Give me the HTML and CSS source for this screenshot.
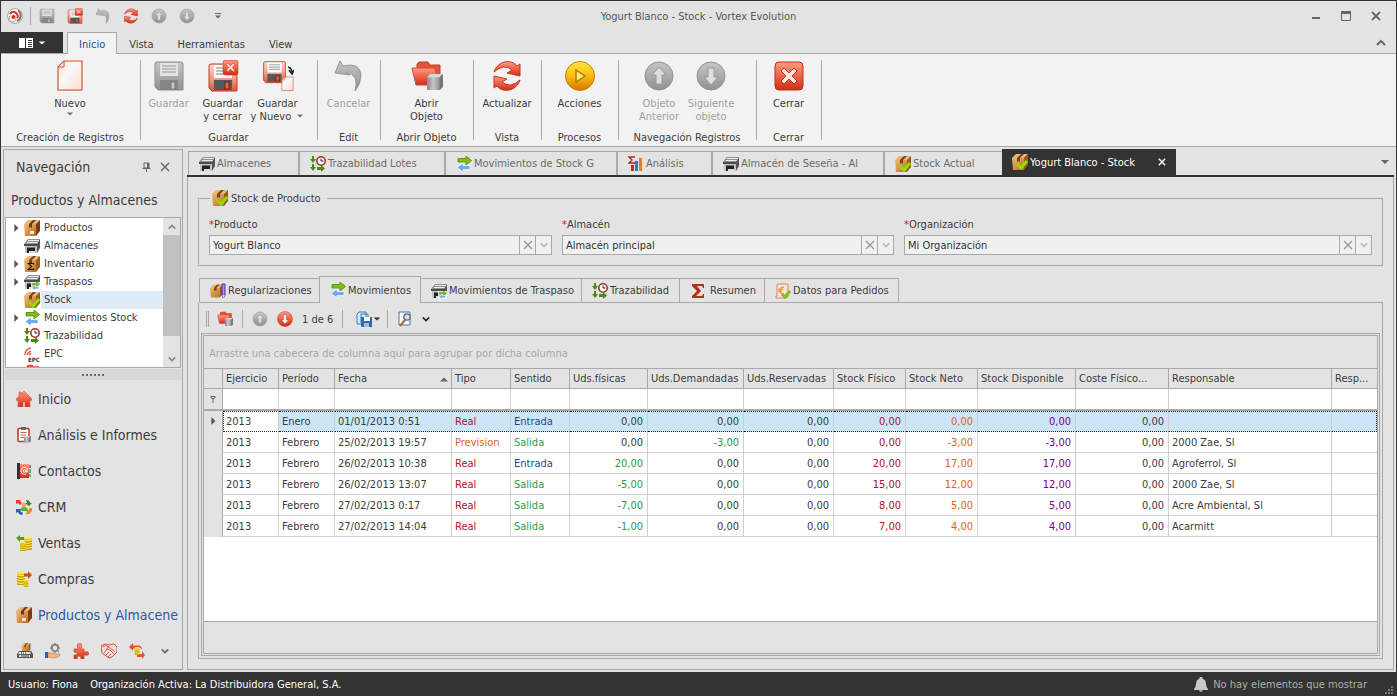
FILE: index.html
```html
<!DOCTYPE html>
<html lang="es">
<head>
<meta charset="utf-8">
<title>Yogurt Blanco - Stock - Vortex Evolution</title>
<link rel="stylesheet" href="styles.css">
</head>
<body>
<svg class="sprite" aria-hidden="true">
  <defs>
    <linearGradient id="red" x1="0" y1="0" x2="0" y2="1"><stop offset="0" stop-color="#ff9a80"/><stop offset=".5" stop-color="#f0604a"/><stop offset="1" stop-color="#c93018"/></linearGradient>
    <linearGradient id="body" x1="0" y1="0" x2="0" y2="1"><stop offset="0" stop-color="#fbd3c9"/><stop offset=".5" stop-color="#f3a292"/><stop offset="1" stop-color="#e2543a"/></linearGradient>
    <linearGradient id="grey" x1="0" y1="0" x2="0" y2="1"><stop offset="0" stop-color="#c6c6c6"/><stop offset="1" stop-color="#919191"/></linearGradient>
    <linearGradient id="gold" x1="0" y1="0" x2="0" y2="1"><stop offset="0" stop-color="#ffe53a"/><stop offset=".5" stop-color="#f9bd10"/><stop offset="1" stop-color="#d87500"/></linearGradient>
    <linearGradient id="metal" x1="0" y1="0" x2="1" y2="0"><stop offset="0" stop-color="#8a8a8a"/><stop offset=".4" stop-color="#c8c8c8"/><stop offset="1" stop-color="#747474"/></linearGradient>
    <linearGradient id="page" x1="0" y1="0" x2="1" y2="1"><stop offset="0" stop-color="#ffd9cf"/><stop offset=".4" stop-color="#f8f8f8"/><stop offset="1" stop-color="#ffdcd2"/></linearGradient>
    <linearGradient id="wood" x1="0" y1="0" x2="1" y2="1"><stop offset="0" stop-color="#f1bb72"/><stop offset="1" stop-color="#b96c24"/></linearGradient>
  </defs>
  <symbol id="logo" viewBox="0 0 16 16"><circle cx="8" cy="8" r="7.5" fill="#f6f6f6" stroke="#aaa"/><path d="M11 2.500a6 6 0 0 1-1 10.500" fill="none" stroke="#777" stroke-width="2"/><path d="M3 8a3.500 3.500 0 1 0 6 2.500" fill="none" stroke="#999"/><path d="M3 6q3-4 6-1t1 5" fill="none" stroke="#e02a22" stroke-width="2"/><circle cx="6.500" cy="9" r="2" fill="#e02a22"/></symbol>
  <symbol id="save-grey" viewBox="0 0 32 32"><path d="M2 4q0-2 2-2h24q2 0 2 2v26H5l-3-3z" fill="url(#grey)" stroke="#8d8d8d"/><path d="M7 3h18v13H7z" fill="#e4e4e4"/><path d="M9 6h14M9 9h14M9 12h14" stroke="#b0b0b0" stroke-width="1.500"/><path d="M7 20h18v10H7z" fill="#858585"/><path d="M18 22h4v7h-4z" fill="#c8c8c8" stroke="#777"/></symbol>
  <symbol id="save-red" viewBox="0 0 32 32"><path d="M2 6q0-2 2-2h24q2 0 2 2v25H5l-3-3z" fill="url(#body)" stroke="#bd3d28"/><path d="M7 5h18v13H7z" fill="#fafafa"/><path d="M9 8h14M9 11h14M9 14h14" stroke="#aaa" stroke-width="1.500"/><path d="M7 20h18v10H7z" fill="#585858"/><path d="M18 22h4v7h-4z" fill="#ef6044" stroke="#702015"/></symbol>
  <symbol id="close-red" viewBox="0 0 32 32"><rect x="2" y="2" width="28" height="28" rx="4" fill="url(#red)" stroke="#c12d17"/><path d="M8 11l3-3 5 5 5-5 3 3-5 5 5 5-3 3-5-5-5 5-3-3 5-5z" fill="#ffe5df" stroke="#b83a25"/></symbol>
  <symbol id="save-close" viewBox="0 0 32 32"><use href="#save-red"/><use href="#close-red" x="15" y="-1" width="17" height="17"/></symbol>
  <symbol id="new" viewBox="0 0 32 32"><path d="M4 9l6-6V1h18v30H4z" fill="#999" opacity=".35"/><path d="M4 7l6-6h18v29H4z" fill="url(#page)" stroke="#d5532f" stroke-width="1.200"/><path d="M4 7h6V1z" fill="#ffece6" stroke="#d5532f"/></symbol>
  <symbol id="save-new" viewBox="0 0 32 32"><use href="#save-red" x="0" y="-2" width="25" height="26"/><path d="M26 7q4 1 4 6m-3-3l3 4 2-4" fill="none" stroke="#222" stroke-width="1.500"/><use href="#new" x="18" y="16" width="15" height="16"/></symbol>
  <symbol id="undo" viewBox="0 0 32 32"><path d="M2 13L7 1l3 5Q27 2 28 15q0 9-6 16 2-9 0-13-3-5-9-6l4 3z" fill="url(#grey)" stroke="#969696"/></symbol>
  <symbol id="cyl" viewBox="0 0 16 16"><path d="M0 3L3 0h12v12l-3 3H0z" fill="url(#metal)"/><path d="M0 3L3 0h12l-3 3z" fill="#d6d6d6"/><path d="M12 3l3-3v12l-3 3z" fill="#777"/></symbol>
  <symbol id="folder" viewBox="0 0 32 32"><path d="M6 4l2-2h9l2 3h10v17H6z" fill="#e5513c" stroke="#c73c27"/><path d="M1 8h23l3 17H5z" fill="url(#red)" stroke="#d24a36"/></symbol>
  <symbol id="open-obj" viewBox="0 0 32 32"><use href="#folder"/><use href="#cyl" x="16" y="14" width="17" height="17"/></symbol>
  <symbol id="refresh" viewBox="0 0 32 32"><path d="M3 12C7 0 21-1 26 6l3-2v12L16 13l5-3Q13 3 3 12z" fill="url(#red)" stroke="#c63521"/><path d="M29 20C25 32 11 33 6 26l-3 2V16l13 3-5 3q8 7 18-2z" fill="url(#red)" stroke="#c63521"/></symbol>
  <symbol id="play" viewBox="0 0 32 32"><circle cx="16" cy="16" r="14.500" fill="url(#gold)" stroke="#c78200"/><path d="M12 10l9 6-9 6z" fill="#ffec74" stroke="#b77900" stroke-width="1.500"/></symbol>
  <symbol id="up-grey" viewBox="0 0 32 32"><circle cx="16" cy="16" r="14" fill="url(#grey)" stroke="#919191"/><path d="M16 7l7 8h-4v9h-6v-9H9z" fill="#dedede" stroke="#999"/></symbol>
  <symbol id="down-grey" viewBox="0 0 32 32"><circle cx="16" cy="16" r="14" fill="url(#grey)" stroke="#919191"/><path d="M16 25l7-8h-4V8h-6v9H9z" fill="#dedede" stroke="#999"/></symbol>
  <symbol id="down-red" viewBox="0 0 32 32"><circle cx="16" cy="16" r="15" fill="url(#red)" stroke="#b93824"/><path d="M16 26l7-8h-4V7h-6v11H9z" fill="#fff" stroke="#c73c27"/></symbol>
  <symbol id="box" viewBox="0 0 16 16"><path d="M0 4l4-4h12l-4 4z" fill="#e8b777"/><path d="M0 4h12v12H1z" fill="url(#wood)"/><path d="M12 4l4-4v11l-4 5z" fill="#7a3d12"/><path d="M5 4l4-4h3L8 4v4L6.500 7 5 8z" fill="#6d3a14"/><path d="M6 11h4v3H6z" fill="#f7e5cd"/></symbol>
  <symbol id="box-plain" viewBox="0 0 16 16"><path d="M0 4l4-4h12l-4 4z" fill="#e8b777"/><path d="M0 4h12v12H1z" fill="url(#wood)"/><path d="M12 4l4-4v11l-4 5z" fill="#9a5a20"/><path d="M5 4l4-4h3L8 4v4L6.500 7 5 8z" fill="#7d4317"/></symbol>
  <symbol id="inventory" viewBox="0 0 16 16"><use href="#box-plain"/><path d="M9.500 8.500V7.500h-5l3 3-3 3h5v-1" fill="none" stroke="#2b1505" stroke-width="1.200"/></symbol>
  <symbol id="stock" viewBox="0 0 16 16"><use href="#box-plain"/><path d="M5 10l4 4 6-7" fill="none" stroke="#8fe000" stroke-width="3"/></symbol>
  <symbol id="box-pen" viewBox="0 0 16 16"><use href="#box-plain" y="1" width="13" height="14"/><path d="M12 1h3v11l-1.500 3L12 12z" fill="#b08be8" stroke="#5128a0"/><path d="M12 12h3l-1.500 3z" fill="#fff" stroke="#777" stroke-width=".5"/></symbol>
  <symbol id="store" viewBox="0 0 16 16"><path d="M0 6l4-5h12l-3 5z" fill="#8f8f8f"/><path d="M3 4.500h11M4 2.500h11" stroke="#ededed"/><path d="M13 6l3-5v9l-3 5z" fill="#555"/><path d="M0 6h13v2H0z" fill="#4c4c4c"/><path d="M1 8h12v7H1z" fill="#c2c2c2"/><path d="M3 9.500h8V15H3z" fill="#222"/><path d="M5 13h6v2H5z" fill="#ddd"/></symbol>
  <symbol id="arrows" viewBox="0 0 16 16"><path d="M2 2.500h8V0l5.500 4.500L10 9V6H2z" fill="#7cc20a" stroke="#4c8a08" stroke-width=".8"/><path d="M14 9.500H7V7l-6 4.500L7 16v-2.500h7z" fill="#6aaaf2" stroke="#fff" stroke-width=".7"/></symbol>
  <symbol id="transfer" viewBox="0 0 16 16"><use href="#store"/><path d="M7 8h9v8H7z" fill="#fff" opacity=".8"/><use href="#arrows" x="7" y="8" width="9" height="8"/></symbol>
  <symbol id="trace" viewBox="0 0 16 16"><path d="M2 0h2v3h2L3 7 0 3h2zM2 8h2v3h2l-3 4-3-4h2zM7 11h4V9l4 3.500L11 16v-2H7z" fill="#4b8a12"/><circle cx="11" cy="5" r="4.200" fill="#fff" stroke="#a23522" stroke-width="1.600"/><path d="M11 2.500V5h2.500" fill="none" stroke="#222"/></symbol>
  <symbol id="epc" viewBox="0 0 16 16"><path d="M1 9V8a7 7 0 0 1 6-6M3 9a6 6 0 0 1 4-4M5 9l2-2" fill="none" stroke="#e0604c" stroke-width="1.500"/><text x="4" y="15.500" font-family="DejaVu Sans Condensed, sans-serif" font-size="6" font-weight="bold" fill="#333">EPC</text></symbol>
  <symbol id="home" viewBox="0 0 16 16"><path d="M0 8l3-3V1h2v2l3-3 8 8-1 2-1-1v7H9v-5H7v5H2V9l-1 1z" fill="url(#red)" stroke="#e1543c" stroke-width=".6"/></symbol>
  <symbol id="clip" viewBox="0 0 16 16"><rect x="2" y="1.500" width="11" height="13" rx="1" fill="#fff" stroke="#c33b2d" stroke-width="1.600"/><path d="M5 0h5v3H5z" fill="#666"/><path d="M4.500 5.500h6M4.500 8h6M4.500 10.500h4" stroke="#c96053"/><use href="#cyl" x="8" y="9" width="7" height="7"/></symbol>
  <symbol id="contacts" viewBox="0 0 16 16"><path d="M1 0h3v16H1z" fill="#333"/><path d="M4 1h9v14H4z" fill="url(#red)"/><path d="M14 2v3" stroke="#9335d0" stroke-width="1.500"/><path d="M14 6v4" stroke="#20a070" stroke-width="1.500"/><path d="M14 11v3" stroke="#4cab20" stroke-width="1.500"/><circle cx="8.500" cy="8" r="1.300" fill="none" stroke="#fff" stroke-width=".9"/><path d="M10 6.500v2.500q2 .5 2-1.500a3.500 3.500 0 1 0-2 3.500" fill="none" stroke="#fff" stroke-width=".9"/></symbol>
  <symbol id="crm" viewBox="0 0 16 16"><path d="M0 1h5L4 2l2 2-2 2-2-2-2 1z" fill="#e5402d"/><path d="M10 1q4 0 4 3h2l-3 3-4-3h2z" fill="#3f7d24"/><path d="M0 10l5 0-1 2 3 2-1 2q-3 0-4-3l-2 1z" fill="#2864b8"/><path d="M16 9v4l-1-1q-1 4-5 3l1-3q2 0 2-2h-2z" fill="#e48721"/><circle cx="8" cy="6" r="2.300" fill="#e7a374"/><path d="M4 12q0-4 4-4t4 4z" fill="#67ad3c"/></symbol>
  <symbol id="coins" viewBox="0 0 8 14"><path d="M0 1.500h8V14H0z" fill="#e9c000"/><ellipse cx="4" cy="1.500" rx="4" ry="1.500" fill="#fbe96a"/><path d="M0 4q4 2 8 0M0 6.500q4 2 8 0M0 9q4 2 8 0M0 11.500q4 2 8 0" fill="none" stroke="#fff07a"/><path d="M0 5q4 2 8 0M0 7.500q4 2 8 0M0 10q4 2 8 0M0 13q4 1 8 0" fill="none" stroke="#a88100" stroke-width=".7"/></symbol>
  <symbol id="sales" viewBox="0 0 16 16"><use href="#coins" x="8" y="1" width="8" height="14"/><use href="#coins" x="4" y="6" width="6" height="10"/><path d="M0 3l4-3v2h4v3H4v2z" fill="#54a317"/></symbol>
  <symbol id="buys" viewBox="0 0 16 16"><use href="#coins" x="1" y="0" width="8" height="14"/><use href="#coins" x="7" y="8" width="6" height="8"/><path d="M16 4l-4-4v2.500H8v3h4V8z" fill="#d04a16"/></symbol>
  <symbol id="print-box" viewBox="0 0 16 16"><use href="#box-plain" x="4" y="0" width="10" height="9"/><path d="M2 8h12l2 3v4H0v-4z" fill="#555"/><path d="M2 9h11l1 2H1zM2 12h11v2H2z" fill="#e5e5e5"/><path d="M4 10h1m1 0h1m1 0h1M4 13h8" stroke="#444"/></symbol>
  <symbol id="gear-hand" viewBox="0 0 16 16"><circle cx="10" cy="5" r="3.200" fill="none" stroke="#888" stroke-width="2"/><path d="M10 0v2M10 8v2M5 5h2M13 5h2M6.500 1.500l1 1M13 8l1 1M13.500 1.500l-1 1" stroke="#888" stroke-width="1.500"/><path d="M3 10h4l3 1h5q1 1-2 3l-4 1-6-1z" fill="#f0b987" stroke="#c47c4a" stroke-width=".7"/><path d="M0 9h3v6H0z" fill="#2564a8"/></symbol>
  <symbol id="puzzle" viewBox="0 0 16 16"><path d="M1 6h4q-2-6 1.500-6T8 6h3v3q5-1 5 1.500T11 12v4H8q0-3-2-3t-2 3H1v-4q3 0 3-1.500T1 9z" fill="url(#red)" stroke="#d8452f" stroke-width=".7"/></symbol>
  <symbol id="shake" viewBox="0 0 16 16"><path d="M0 3l4-2 4 1 5-1 3 3v5l-5 5-3 1-7-5z" fill="#ffdcd4" stroke="#c9554c"/><path d="M1 4q4-3 7 0l6 5M3 10l3-4 3 1 4 4M5 12l3-3M7 14l3-3M8 3L5 7" fill="none" stroke="#c9554c" stroke-width=".9"/></symbol>
  <symbol id="cycle" viewBox="0 0 16 16"><path d="M0 4l4-4v2.500h6v3H4V8zM16 12l-3 4v-2H8v-3h5V8zM9 2q4 1 4 4l-2-1z" fill="#e5532b"/><use href="#coins" x="5" y="4" width="6" height="8"/></symbol>
  <symbol id="chart" viewBox="0 0 16 16"><path d="M7 1H1l3 3-3 3h6" fill="none" stroke="#b22" stroke-width="1.300"/><path d="M3 9h3v6H3z" fill="#c8301e"/><path d="M7 5h3v10H7z" fill="#3d72bd"/><path d="M11 2h3v13h-3z" fill="#f07c12"/></symbol>
  <symbol id="sigma" viewBox="0 0 16 16"><path d="M2 1h12v4h-1q0-2-2-2H7l4 5-5 5h5q2 0 2-2h1v4H2v-2l5-5-5-5z" fill="#b92d14"/></symbol>
  <symbol id="euro" viewBox="0 0 16 16"><path d="M3 1h9q2 0 1 2v10q0 2-2 2H2q-2 0-1-2h1V3q0-2 1-2z" fill="#fbe3dc" stroke="#d8836f"/><path d="M9 4.500q-4-1-4 3t4 3M3 6.500h5M3 8.500h4" fill="none" stroke="#eda01d" stroke-width="1.300"/><path d="M7 11l3 3 5-6" fill="none" stroke="#7cc50a" stroke-width="3"/></symbol>
  <symbol id="export" viewBox="0 0 16 16"><path d="M1 3l2-2h7v12H1zM5 3h7v9H5z" fill="#d7e9fa" stroke="#3a7cb8"/><path d="M5 6h11v10H6l-1-1z" fill="#2c6cab"/><path d="M8 6h6v4H8z" fill="#fff"/><path d="M8 12h5v4H8z" fill="#9bc0e0"/></symbol>
  <symbol id="preview" viewBox="0 0 16 16"><path d="M2 1h11v13H2z" fill="#f8fbff" stroke="#3a7cb8"/><circle cx="10" cy="6" r="3.200" fill="#d2e2ef" stroke="#666" stroke-width="1.300"/><path d="M8 9l-5 6" stroke="#9c6b4a" stroke-width="2"/></symbol>
  <symbol id="bell" viewBox="0 0 16 16"><path d="M7 1h2l1 2q3 1 3 5 0 3 2 5v1H1v-1q2-2 2-5 0-4 3-5z" fill="#c9c9c9"/><path d="M6 14h4l-1 2H7z" fill="#999"/></symbol>
  <symbol id="x" viewBox="0 0 10 10"><path d="M1 1l8 8M9 1L1 9" fill="none" stroke="currentColor" stroke-width="1.800"/></symbol>
  <symbol id="x-thin" viewBox="0 0 10 10"><path d="M1 1l8 8M9 1L1 9" fill="none" stroke="currentColor" stroke-width="1.400"/></symbol>
  <symbol id="chev" viewBox="0 0 10 10"><path d="M1 3l4 4 4-4" fill="none" stroke="currentColor" stroke-width="2"/></symbol>
  <symbol id="chev-up" viewBox="0 0 10 10"><path d="M1 7l4-4 4 4" fill="none" stroke="currentColor" stroke-width="2"/></symbol>
  <symbol id="tri" viewBox="0 0 10 10"><path d="M1 3h8L5 7z" fill="currentColor"/></symbol>
  <symbol id="tri-up" viewBox="0 0 10 10"><path d="M0 8h10L5 3z" fill="currentColor"/></symbol>
  <symbol id="tri-right" viewBox="0 0 10 10"><path d="M3 0l5 5-5 5z" fill="currentColor"/></symbol>
  <symbol id="pin" viewBox="0 0 10 10"><path d="M3 1h5v5H3zM1.500 6.500h8M5.500 6v4" fill="none" stroke="currentColor"/><path d="M6 1h2v5H6z" fill="currentColor"/></symbol>
  <symbol id="menu-book" viewBox="0 0 16 12"><path d="M1 1h6v10H1zM8 1h7v10H8z" fill="#fff"/><path d="M10 3.500h4M10 5.500h4M10 7.500h4M10 9.500h4" stroke="#333"/></symbol>
</svg>

<div class="app">
  <header class="titlebar">
    <div class="quick">
      <svg class="i16"><use href="#logo"/></svg><span class="vsep"></span>
      <button class="plain" aria-label="Guardar"><svg class="i16"><use href="#save-grey"/></svg></button>
      <button class="plain" aria-label="Guardar y cerrar"><svg class="i16"><use href="#save-close"/></svg></button>
      <button class="plain" aria-label="Cancelar"><svg class="i16"><use href="#undo"/></svg></button>
      <button class="plain" aria-label="Actualizar"><svg class="i16"><use href="#refresh"/></svg></button>
      <button class="plain" aria-label="Objeto anterior"><svg class="i16"><use href="#up-grey"/></svg></button>
      <button class="plain" aria-label="Siguiente objeto"><svg class="i16"><use href="#down-grey"/></svg></button>
      <button class="plain more" aria-label="Personalizar"><svg class="i16" viewBox="0 0 16 16"><path d="M5 5.500h6" stroke="#666"/><path d="M5 7.500h6l-3 3z" fill="#666"/></svg></button>
    </div>
    <h1 class="title">Yogurt Blanco - Stock - Vortex Evolution</h1>
    <div class="winbtns">
      <button class="plain" aria-label="Minimizar"><svg class="i10" viewBox="0 0 10 10"><path d="M1 7h8" stroke="#666" stroke-width="2"/></svg></button>
      <button class="plain" aria-label="Maximizar"><svg class="i10" viewBox="0 0 10 10"><path d="M.5 1v8.500h9V1" fill="none" stroke="#666"/><path d="M0 1.500h10" stroke="#666" stroke-width="3"/></svg></button>
      <button class="plain" aria-label="Cerrar ventana"><svg class="i10"><use href="#x"/></svg></button>
    </div>
  </header>

  <nav class="ribbon-tabs">
    <button class="appmenu" aria-label="Menú"><svg class="book"><use href="#menu-book"/></svg><svg class="i8"><use href="#tri"/></svg></button>
    <button class="rtab active">Inicio</button>
    <button class="rtab">Vista</button>
    <button class="rtab">Herramientas</button>
    <button class="rtab">View</button>
    <button class="plain collapse" aria-label="Contraer"><svg class="i10"><use href="#chev-up"/></svg></button>
  </nav>

  <section class="ribbon">
    <div class="group g-create"><div class="btns"><button class="big"><svg class="i32"><use href="#new"/></svg><span>Nuevo</span><svg class="i8"><use href="#tri"/></svg></button></div><div class="gname">Creación de Registros</div></div>
    <div class="group g-save"><div class="btns">
      <button class="big" disabled><svg class="i32"><use href="#save-grey"/></svg><span>Guardar</span></button>
      <button class="big"><svg class="i32"><use href="#save-close"/></svg><span>Guardar<br>y cerrar</span></button>
      <button class="big"><svg class="i32"><use href="#save-new"/></svg><span>Guardar<br>y Nuevo <svg class="i8"><use href="#tri"/></svg></span></button>
    </div><div class="gname">Guardar</div></div>
    <div class="group g-edit"><div class="btns"><button class="big" disabled><svg class="i32"><use href="#undo"/></svg><span>Cancelar</span></button></div><div class="gname">Edit</div></div>
    <div class="group g-open"><div class="btns"><button class="big"><svg class="i32"><use href="#open-obj"/></svg><span>Abrir<br>Objeto</span></button></div><div class="gname">Abrir Objeto</div></div>
    <div class="group g-view"><div class="btns"><button class="big"><svg class="i32"><use href="#refresh"/></svg><span>Actualizar</span></button></div><div class="gname">Vista</div></div>
    <div class="group g-proc"><div class="btns"><button class="big"><svg class="i32"><use href="#play"/></svg><span>Acciones</span></button></div><div class="gname">Procesos</div></div>
    <div class="group g-nav"><div class="btns">
      <button class="big" disabled><svg class="i32"><use href="#up-grey"/></svg><span>Objeto<br>Anterior</span></button>
      <button class="big" disabled><svg class="i32"><use href="#down-grey"/></svg><span>Siguiente<br>objeto</span></button>
    </div><div class="gname">Navegación Registros</div></div>
    <div class="group g-close"><div class="btns"><button class="big"><svg class="i32"><use href="#close-red"/></svg><span>Cerrar</span></button></div><div class="gname">Cerrar</div></div>
  </section>

  <div class="work">
    <aside class="side">
      <div class="side-head"><h2>Navegación</h2><button class="plain" aria-label="Fijar"><svg class="i10"><use href="#pin"/></svg></button><button class="plain" aria-label="Cerrar panel"><svg class="i10"><use href="#x-thin"/></svg></button></div>
      <h3 class="side-sub">Productos y Almacenes</h3>
      <div class="treebox">
        <ul class="tree">
          <li><svg class="i8 exp"><use href="#tri-right"/></svg><svg class="i16"><use href="#box"/></svg><a href="#">Productos</a></li>
          <li><span class="exp"></span><svg class="i16"><use href="#store"/></svg><a href="#">Almacenes</a></li>
          <li><svg class="i8 exp"><use href="#tri-right"/></svg><svg class="i16"><use href="#inventory"/></svg><a href="#">Inventario</a></li>
          <li><svg class="i8 exp"><use href="#tri-right"/></svg><svg class="i16"><use href="#transfer"/></svg><a href="#">Traspasos</a></li>
          <li><span class="exp"></span><svg class="i16"><use href="#stock"/></svg><a href="#" class="sel">Stock</a></li>
          <li><svg class="i8 exp"><use href="#tri-right"/></svg><svg class="i16"><use href="#arrows"/></svg><a href="#">Movimientos Stock</a></li>
          <li><span class="exp"></span><svg class="i16"><use href="#trace"/></svg><a href="#">Trazabilidad</a></li>
          <li><span class="exp"></span><svg class="i16"><use href="#epc"/></svg><a href="#">EPC</a></li>
          <li><span class="exp"></span><svg class="i16"><use href="#folder"/></svg></li>
        </ul>
        <div class="scroll"><button class="plain" aria-label="Subir"><svg class="i8"><use href="#chev-up"/></svg></button><span class="thumb"></span><button class="plain" aria-label="Bajar"><svg class="i8"><use href="#chev"/></svg></button></div>
      </div>
      <div class="splitter"><i></i><i></i><i></i><i></i><i></i><i></i></div>
      <nav class="areas">
        <a href="#"><svg class="i16"><use href="#home"/></svg>Inicio</a>
        <a href="#"><svg class="i16"><use href="#clip"/></svg>Análisis e Informes</a>
        <a href="#"><svg class="i16"><use href="#contacts"/></svg>Contactos</a>
        <a href="#"><svg class="i16"><use href="#crm"/></svg>CRM</a>
        <a href="#"><svg class="i16"><use href="#sales"/></svg>Ventas</a>
        <a href="#"><svg class="i16"><use href="#buys"/></svg>Compras</a>
        <a href="#" class="current"><svg class="i16"><use href="#box"/></svg>Productos y Almacenes</a>
      </nav>
      <div class="shortcuts">
        <button class="plain" aria-label="Impresión"><svg class="i16"><use href="#print-box"/></svg></button>
        <button class="plain" aria-label="Servicios"><svg class="i16"><use href="#gear-hand"/></svg></button>
        <button class="plain" aria-label="Extensiones"><svg class="i16"><use href="#puzzle"/></svg></button>
        <button class="plain" aria-label="Acuerdos"><svg class="i16"><use href="#shake"/></svg></button>
        <button class="plain" aria-label="Tesorería"><svg class="i16"><use href="#cycle"/></svg></button>
        <button class="plain last" aria-label="Más"><svg class="i8"><use href="#chev"/></svg></button>
      </div>
    </aside>

    <main class="main">
      <div class="doc-tabs">
        <button class="dtab t1"><svg class="i16"><use href="#store"/></svg>Almacenes</button>
        <button class="dtab t2"><svg class="i16"><use href="#trace"/></svg>Trazabilidad Lotes</button>
        <button class="dtab t3"><svg class="i16"><use href="#arrows"/></svg>Movimientos de Stock G</button>
        <button class="dtab t4"><svg class="i16"><use href="#chart"/></svg>Análisis</button>
        <button class="dtab t5"><svg class="i16"><use href="#store"/></svg>Almacén de Seseña - Al</button>
        <button class="dtab t6"><svg class="i16"><use href="#stock"/></svg>Stock Actual</button>
        <button class="dtab active"><svg class="i16"><use href="#stock"/></svg><span>Yogurt Blanco - Stock</span><svg class="i8"><use href="#x"/></svg></button>
        <button class="plain dlist" aria-label="Lista de pestañas"><svg class="i10"><use href="#tri"/></svg></button>
      </div>
      <div class="doc">
        <fieldset class="card">
          <legend><svg class="i16"><use href="#stock"/></svg>Stock de Producto</legend>
          <div class="fields">
            <div><label for="f1"><b>*</b>Producto</label><div class="combo"><input id="f1" value="Yogurt Blanco"><button aria-label="Borrar producto"><svg class="i10"><use href="#x-thin"/></svg></button><button class="drop" aria-label="Elegir producto"><svg class="i8"><use href="#chev"/></svg></button></div></div>
            <div><label for="f2"><b>*</b>Almacén</label><div class="combo"><input id="f2" value="Almacén principal"><button aria-label="Borrar almacén"><svg class="i10"><use href="#x-thin"/></svg></button><button class="drop" aria-label="Elegir almacén"><svg class="i8"><use href="#chev"/></svg></button></div></div>
            <div><label for="f3"><b>*</b>Organización</label><div class="combo"><input id="f3" value="Mi Organización"><button aria-label="Borrar organización"><svg class="i10"><use href="#x-thin"/></svg></button><button class="drop" aria-label="Elegir organización"><svg class="i8"><use href="#chev"/></svg></button></div></div>
          </div>
        </fieldset>

        <div class="sub-tabs">
          <button class="stab s1"><svg class="i16"><use href="#box-pen"/></svg>Regularizaciones</button>
          <button class="stab s2 active"><svg class="i16"><use href="#arrows"/></svg>Movimientos</button>
          <button class="stab s3"><svg class="i16"><use href="#transfer"/></svg>Movimientos de Traspaso</button>
          <button class="stab s4"><svg class="i16"><use href="#trace"/></svg>Trazabilidad</button>
          <button class="stab s5"><svg class="i16"><use href="#sigma"/></svg>Resumen</button>
          <button class="stab s6"><svg class="i16"><use href="#euro"/></svg>Datos para Pedidos</button>
          <span class="rest"></span>
        </div>
        <div class="subpanel">
          <div class="toolbar">
            <span class="grip"></span>
            <button class="plain" aria-label="Abrir objeto"><svg class="i16"><use href="#open-obj"/></svg></button><span class="vsep"></span>
            <button class="plain" aria-label="Anterior"><svg class="i16"><use href="#up-grey"/></svg></button>
            <button class="plain" aria-label="Siguiente"><svg class="i16"><use href="#down-red"/></svg></button>
            <span>1 de 6</span><span class="vsep"></span>
            <button class="plain export" aria-label="Exportar"><svg class="i16"><use href="#export"/></svg><svg class="i8"><use href="#tri"/></svg></button><span class="vsep"></span>
            <button class="plain" aria-label="Vista previa"><svg class="i16"><use href="#preview"/></svg></button>
            <button class="plain dark" aria-label="Más opciones"><svg class="i8"><use href="#chev"/></svg></button>
          </div>
          <div class="gridwrap"><div class="grid">
            <div class="groupby">Arrastre una cabecera de columna aquí para agrupar por dicha columna</div>
            <div class="rows">
            <table>
              <colgroup><col class="c-mark"><col class="c-56"><col class="c-56"><col class="c-date"><col class="c-59"><col class="c-59"><col class="c-78"><col class="c-96"><col class="c-90"><col class="c-72"><col class="c-72"><col class="c-98"><col class="c-93"><col><col class="c-45"></colgroup>
              <thead>
                <tr><th></th><th>Ejercicio</th><th>Período</th><th><div class="sorted">Fecha<svg class="i8"><use href="#tri-up"/></svg></div></th><th>Tipo</th><th>Sentido</th><th>Uds.físicas</th><th>Uds.Demandadas</th><th>Uds.Reservadas</th><th>Stock Físico</th><th>Stock Neto</th><th>Stock Disponible</th><th>Coste Físico...</th><th>Responsable</th><th>Resp...</th></tr>
                <tr class="filter"><td class="mark"><svg class="i8" viewBox="0 0 8 8"><path d="M1.500 1h5v1.500L4.500 4.500V8h-1V4.500l-2-2z" fill="#666"/><path d="M3 2h2v1H3z" fill="#e3e3e3"/></svg></td><td></td><td></td><td></td><td></td><td></td><td></td><td></td><td></td><td></td><td></td><td></td><td></td><td></td><td></td></tr>
              </thead>
              <tbody>
                <tr class="current"><td class="mark"><svg class="i8"><use href="#tri-right"/></svg></td><td>2013</td><td>Enero</td><td>01/01/2013 0:51</td><td class="red">Real</td><td class="blue">Entrada</td><td class="n">0,00</td><td class="n">0,00</td><td class="n">0,00</td><td class="n red">0,00</td><td class="n orange">0,00</td><td class="n purple">0,00</td><td class="n">0,00</td><td></td><td></td></tr>
                <tr><td class="mark"></td><td>2013</td><td>Febrero</td><td>25/02/2013 19:57</td><td class="orange">Prevision</td><td class="green">Salida</td><td class="n">0,00</td><td class="n green">-3,00</td><td class="n">0,00</td><td class="n red">0,00</td><td class="n orange">-3,00</td><td class="n purple">-3,00</td><td class="n">0,00</td><td>2000 Zae, Sl</td><td></td></tr>
                <tr><td class="mark"></td><td>2013</td><td>Febrero</td><td>26/02/2013 10:38</td><td class="red">Real</td><td class="blue">Entrada</td><td class="n green">20,00</td><td class="n">0,00</td><td class="n">0,00</td><td class="n red">20,00</td><td class="n orange">17,00</td><td class="n purple">17,00</td><td class="n">0,00</td><td>Agroferrol, Sl</td><td></td></tr>
                <tr><td class="mark"></td><td>2013</td><td>Febrero</td><td>26/02/2013 13:07</td><td class="red">Real</td><td class="green">Salida</td><td class="n green">-5,00</td><td class="n">0,00</td><td class="n">0,00</td><td class="n red">15,00</td><td class="n orange">12,00</td><td class="n purple">12,00</td><td class="n">0,00</td><td>2000 Zae, Sl</td><td></td></tr>
                <tr><td class="mark"></td><td>2013</td><td>Febrero</td><td>27/02/2013 0:17</td><td class="red">Real</td><td class="green">Salida</td><td class="n green">-7,00</td><td class="n">0,00</td><td class="n">0,00</td><td class="n red">8,00</td><td class="n orange">5,00</td><td class="n purple">5,00</td><td class="n">0,00</td><td>Acre Ambiental, Sl</td><td></td></tr>
                <tr><td class="mark"></td><td>2013</td><td>Febrero</td><td>27/02/2013 14:04</td><td class="red">Real</td><td class="green">Salida</td><td class="n green">-1,00</td><td class="n">0,00</td><td class="n">0,00</td><td class="n red">7,00</td><td class="n orange">4,00</td><td class="n purple">4,00</td><td class="n">0,00</td><td>Acarmitt</td><td></td></tr>
              </tbody>
            </table>
            </div>
            <div class="gfoot"></div>
          </div></div>
        </div>
      </div>
    </main>
  </div>

  <footer class="status">
    <span>Usuario: Fiona</span><span>Organización Activa: La Distribuidora General, S.A.</span>
    <span class="notice"><svg class="i16"><use href="#bell"/></svg>No hay elementos que mostrar</span>
    <svg class="i10 resize" viewBox="0 0 10 10"><path d="M7 1h2M4 4h2M7 4h2M1 7h2M4 7h2M7 7h2" stroke="#777" stroke-width="2"/></svg>
  </footer>
</div>
</body>
</html>
```

FILE: styles.css
```css
:root {
  --bg: #e3e3e3;
  --light: #f2f2f2;
  --line: #a9a9a9;
  --dark: #333;
  --text: #3c3c3c;
}
* { box-sizing: border-box; }
body {
  margin: 0;
  font: 11px/13px "DejaVu Sans Condensed", "DejaVu Sans", Tahoma, sans-serif;
  color: var(--text);
}
button { font: inherit; color: inherit; margin: 0; }
svg { display: block; flex: none; overflow: visible; }
a { color: inherit; text-decoration: none; }
h1, h2, h3, ul { margin: 0; padding: 0; font-weight: normal; list-style: none; }
.sprite { position: absolute; width: 0; height: 0; }
.i8 { width: 8px; height: 8px; }
.i10 { width: 10px; height: 10px; }
.i16 { width: 16px; height: 16px; }
.i32 { width: 32px; height: 32px; }
.plain { display: flex; align-items: center; border: 0; padding: 0; background: none; color: #666; }
.vsep { width: 1px; height: 18px; background: var(--line); }

.app {
  display: flex;
  flex-direction: column;
  height: 100vh;
  background: var(--bg);
  border: 1px solid var(--dark);
  border-bottom: 0;
}

.titlebar { display: grid; grid-template-columns: 1fr auto 1fr; align-items: center; height: 31px; flex: none; padding-bottom: 1px; }
.quick { display: flex; align-items: center; gap: 12px; padding-left: 6px; }
.quick .vsep { margin: 0 -4px 0 -5px; }
.quick .more { margin-left: 3px; }
.title { font-size: 11px; color: #555; }
.winbtns { display: flex; justify-content: flex-end; gap: 20px; padding-right: 15px; }

.ribbon-tabs { display: flex; height: 22px; flex: none; border-bottom: 1px solid var(--line); }
.appmenu { display: flex; align-items: center; justify-content: center; gap: 4px; width: 62px; margin-right: 4px; border: 0; background: var(--dark); color: #fff; }
.book { width: 16px; height: 12px; }
.rtab { border: 1px solid transparent; border-bottom: 0; background: none; padding: 2px 11px 0; }
.rtab.active { height: 22px; border-color: var(--line); background: var(--light); color: #2a4d9b; }
.collapse { margin-left: auto; padding-right: 10px; }

.ribbon { display: flex; height: 93px; flex: none; background: var(--light); border-bottom: 1px solid var(--line); }
.group { position: relative; display: flex; flex-direction: column; justify-content: space-between; padding: 6px 2px 2px 0; }
.group::after { content: ""; position: absolute; right: 0; top: 6px; bottom: 6px; width: 1px; background: var(--line); }
.btns { display: flex; justify-content: center; }
.g-create { width: 140px; }
.g-save { width: 177px; }
.g-save .btns { gap: 2px; padding-right: 10px; }
.g-edit { width: 63px; }
.g-open { width: 93px; }
.g-view { width: 68px; }
.g-proc { width: 77px; }
.g-nav { width: 138px; }
.g-nav .btns { padding-right: 4px; }
.g-close { width: 65px; }
.big { display: flex; flex-direction: column; align-items: center; gap: 5px; min-width: 52px; padding: 0; border: 0; background: none; white-space: nowrap; }
.big:disabled { color: #a0a0a0; }
.big .i8 { color: #777; }
.big > .i8 { margin-top: -5px; }
.big span .i8 { display: inline-block; margin-left: 2px; }
.gname { text-align: center; }

.work { flex: 1; display: flex; gap: 4px; min-height: 0; padding: 2px; }

.side { display: flex; flex-direction: column; width: 180px; flex: none; border: 1px solid var(--line); padding: 0 1px; }
.side-head { display: flex; align-items: center; gap: 9px; height: 34px; flex: none; padding: 0 11px; }
.side-head h2 { flex: 1; font-size: 14px; line-height: 18px; }
.side-sub { height: 33px; flex: none; padding-left: 6px; font-size: 14px; line-height: 32px; white-space: nowrap; }
.treebox { display: flex; height: 151px; flex: none; border: 1px solid var(--line); background: #fff; overflow: hidden; }
.tree { flex: 1; padding-top: 1px; }
.tree li { display: flex; align-items: center; height: 18px; padding-left: 6px; }
.tree .exp { width: 8px; margin-right: 4px; color: #555; }
.tree a { flex: 1; margin-left: 1px; padding-left: 3px; line-height: 18px; white-space: nowrap; }
.tree .sel { background: #dfebf6; }
.scroll { display: flex; flex-direction: column; width: 17px; background: var(--bg); }
.scroll .plain { height: 17px; justify-content: center; color: #888; }
.thumb { height: 101px; background: #c1c1c1; margin-bottom: auto; }
.splitter { display: flex; align-items: center; justify-content: center; gap: 2px; height: 11px; flex: none; margin: 1px 0; background: #d8d8d8; }
.splitter i { width: 2px; height: 2px; background: #666; }
.areas { display: flex; flex-direction: column; }
.areas a { display: flex; align-items: center; gap: 6px; height: 36px; margin-right: 3px; padding-left: 11px; font-size: 14px; line-height: 18px; white-space: nowrap; overflow: hidden; }
.areas .current { color: #2a5aa5; }
.shortcuts { display: flex; align-items: center; gap: 12px; flex: 1; padding-left: 12px; }
.shortcuts .last { margin-left: 4px; }

.main { flex: 1; display: flex; flex-direction: column; min-width: 0; }
.doc-tabs { display: flex; align-items: flex-end; height: 28px; flex: none; border-bottom: 2px solid var(--dark); }
.dtab { display: flex; align-items: center; gap: 2px; height: 24px; padding: 0 10px; border: 1px solid var(--line); border-bottom: 0; background: none; color: #6a6a6a; white-space: nowrap; }
.t1 { width: 111px; margin-left: 1px; }
.t2 { width: 146px; }
.t3, .t5 { width: 172px; }
.t4 { width: 95px; }
.t6 { width: 118px; border-right: 0; }
.dtab.active { width: 174px; height: 26px; border: 0; background: var(--dark); color: #fff; }
.dtab.active span { flex: 1; text-align: left; }
.dlist { align-self: center; margin-left: auto; padding-right: 4px; }
.doc { flex: 1; display: flex; flex-direction: column; min-height: 0; padding: 13px 10px 10px; border: 1px solid var(--line); border-top: 0; }

.card { min-width: 0; margin: 0; padding: 12px 10px 10px; border: 1px solid var(--line); }
.card legend { display: flex; align-items: center; gap: 3px; margin-left: 1px; padding: 0 6px 0 2px; }
.fields { display: grid; grid-template-columns: 343fr 332fr 468fr; gap: 10px; }
.fields label { display: block; margin-bottom: 4px; }
.fields b { color: #d01818; font-weight: normal; }
.combo { display: flex; height: 20px; border: 1px solid var(--line); background: #f0f0f0; }
.combo input { flex: 1; min-width: 0; border: 0; padding: 0 3px; background: none; font: inherit; color: #333; }
.combo button { display: flex; align-items: center; justify-content: center; width: 16px; padding: 0; border: 0; border-left: 1px solid var(--line); background: none; color: #999; }
.combo .drop { color: #b8b8b8; }

.sub-tabs { display: flex; align-items: flex-end; height: 27px; margin-top: 10px; flex: none; }
.stab { display: flex; align-items: center; gap: 2px; height: 25px; padding: 0 10px; border: 1px solid var(--line); background: none; white-space: nowrap; }
.stab + .stab { border-left: 0; }
.s1 { width: 120px; border-right: 0; margin-left: 1px; }
.stab.s2 { width: 102px; height: 27px; border-left: 1px solid var(--line); border-bottom: 0; }
.s3 { width: 161px; }
.s4 { width: 98px; }
.s5 { width: 85px; gap: 4px; }
.s6 { width: 134px; }
.rest { flex: 1; border-bottom: 1px solid var(--line); }
.subpanel { flex: 1; display: flex; flex-direction: column; min-height: 0; border: 1px solid var(--line); border-top: 0; padding: 0 2px 2px; }
.toolbar { display: flex; align-items: center; gap: 9px; height: 30px; padding: 2px 0 0 5px; flex: none; }
.toolbar span { white-space: nowrap; }
.grip { width: 3px; height: 16px; margin-right: -1px; border: solid var(--line); border-width: 0 1px; }
.export { gap: 1px; color: #333; margin-left: 4px; margin-right: -3px; }
.toolbar .dark { color: #222; }
.gridwrap { flex: 1; display: flex; min-height: 0; border: 1px solid var(--line); padding: 1px; }
.grid { flex: 1; display: flex; flex-direction: column; min-width: 0; border: 1px solid var(--line); }
.groupby { height: 32px; flex: none; padding-left: 5px; line-height: 36px; color: #a8a8a8; }
.rows { flex: 1; min-height: 0; background: #fff; overflow: hidden; }
table { width: 100%; table-layout: fixed; border-collapse: separate; border-spacing: 0; }
.c-mark { width: 19px; }
.c-56 { width: 56px; }
.c-date { width: 117px; }
.c-59 { width: 59px; }
.c-78 { width: 78px; }
.c-96 { width: 96px; }
.c-90 { width: 90px; }
.c-72 { width: 72px; }
.c-98 { width: 98px; }
.c-93 { width: 93px; }
.c-45 { width: 45px; }
th, td { height: 21px; padding: 0 3px; border: solid #d0d0d0; border-width: 0 1px 1px 0; white-space: nowrap; overflow: hidden; text-align: left; font-weight: normal; }
th { border-color: var(--line); border-top: 1px solid var(--line); height: 21px; background: var(--bg); }
tr > :last-child { border-right: 0; }
.filter td { height: 22px; border-bottom: 2px solid var(--line); }
.sorted { display: flex; align-items: center; justify-content: space-between; }
.sorted svg { color: #666; }
td.mark { padding: 0 5px; border-right-color: var(--line); background: var(--bg); color: #555; }
tbody .mark { border-bottom-color: var(--bg); }
.current td:not(.mark) { background: #cde6f7; border-bottom: 1px dotted #222; border-top: 1px dotted #222; }
.current td:nth-child(2):not(.mark) { background: #fff; border-left: 1px dotted #222; padding-left: 2px; }
.current td:last-child { border-right: 1px dotted #222; }
td.n { text-align: right; padding-right: 4px; }
.red { color: #b01030; }
.orange { color: #d9651a; }
.blue { color: #1d4a86; }
.green { color: #2f9a4a; }
.purple { color: #800080; }
.gfoot { height: 32px; flex: none; border-top: 1px solid var(--line); }

.status { display: flex; align-items: center; gap: 12px; height: 24px; flex: none; padding: 0 2px 0 7px; background: var(--dark); color: #fff; white-space: nowrap; }
.notice { display: flex; align-items: center; gap: 4px; margin-left: auto; color: #b0b0a8; }
.resize { align-self: flex-end; margin-left: 5px; }
```
